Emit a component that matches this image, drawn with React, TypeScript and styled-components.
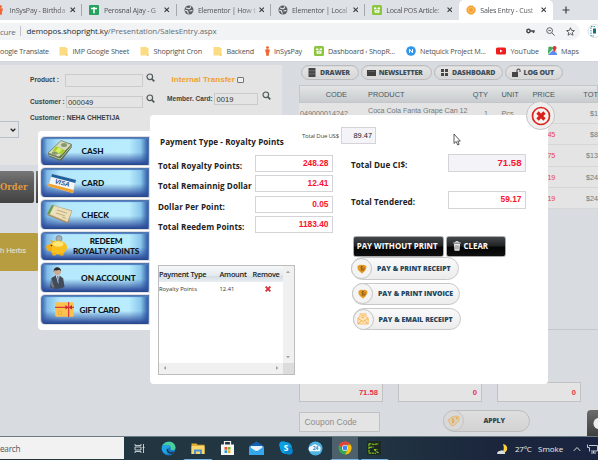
import React from "react";
import styled, { createGlobalStyle, css } from "styled-components";

const Global = createGlobalStyle`
  * { box-sizing: border-box; }
  body { margin: 0; overflow: hidden; font-family: "Open Sans", sans-serif; }
  svg { display: block; flex: none; }
`;

const arial = css`font-family: "Liberation Sans", Arial, sans-serif;`;

const Screen = styled.div`
  width: 598px; height: 460px; overflow: hidden; background: #d8dbe0;
  display: flex; flex-direction: column; white-space: nowrap;
`;

/* ---------- browser ---------- */
const TabStrip = styled.div`
  height: 20px; flex: none; background: #dee1e6; display: flex; overflow: hidden;
`;
const TabBox = styled.div<{ $active?: boolean; $first?: boolean }>`
  flex: none; width: 94.1px; height: 20px; display: flex; align-items: center; padding-left: 7px;
  margin-left: ${p => (p.$first ? "-11.7px" : "0")};
  background: ${p => (p.$active ? "#fff" : "transparent")};
  border-radius: 5px 5px 0 0;
`;
const TabTitle = styled.span`
  width: 59px; margin-left: 4.5px; font-size: 7.1px; color: #505357; line-height: 12px; letter-spacing: -0.22px;
  mask-image: linear-gradient(90deg, #000 78%, rgba(0, 0, 0, .25) 98%);
`;
const TabClose = styled.svg` margin-left: 1.5px; `;
const TabRule = styled.i` width: 1px; height: 12px; background: #a4a7ab; margin-left: auto; `;
const NewTab = styled.svg` margin: 6px 0 0 9px; `;

const AddressRow = styled.div`
  height: 21px; flex: none; background: #fff; display: flex; align-items: center;
`;
const Omnibox = styled.div`
  width: 586px; height: 17px; margin-top: 1px; background: #f1f3f4; border-radius: 0 9px 9px 0;
  display: flex; align-items: center; font-size: 8px; color: #6a6e73;
`;
const Secure = styled.span` width: 20px; letter-spacing: -0.25px; `;
const Url = styled.span` border-left: 1px solid #bfc2c6; padding-left: 5.5px; line-height: 10px; flex: 1; letter-spacing: -0.1px; b { font-weight: 400; color: #26292d; } `;
const OmniIcons = styled.span` display: flex; gap: 11px; align-items: center; padding-right: 5px; `;
const Extension = styled.svg` margin: 1px 0 0 7px; `;

const Bookmarks = styled.div`
  height: 20px; flex: none; background: #fff; display: grid; align-items: center;
  grid-template-columns: 59px 81px 73px 51.5px 49px 92px 90.5px 51.5px 49px;
`;
const Bookmark = styled.span`
  display: flex; align-items: center; font-size: 7.2px; color: #4d5054; letter-spacing: -0.16px;
  height: 16px; margin-top: -1px;
  svg { margin-right: 4.5px; }
`;

/* ---------- page ---------- */
const Page = styled.main`
  height: 375px; flex: none; position: relative; display: grid; grid-template-columns: 299px 299px; ${arial}
  background: #d8dbe0; border-top: 1px solid #d2d6da;
`;
const LeftSide = styled.section` padding-top: 3px; `;
const FormPanel = styled.div` width: 282px; height: 100px; background: #e4e4e4; display: flex; `;
const MainFields = styled.div` width: 137px; margin-left: 30px; `;
const CardFields = styled.div` width: 115px; `;
const FieldRow = styled.div<{ $top: number; $h: number }>`
  display: flex; align-items: center; margin-top: ${p => p.$top}px; height: ${p => p.$h}px;
  svg { margin: -6px 0 0 3.5px; }
`;
const FieldLabel = styled.label<{ $w?: number; $up?: boolean }>`
  width: ${p => (p.$w ? p.$w + "px" : "auto")}; font-size: 6.6px; font-weight: 700; color: #3f3f3f;
  padding-bottom: ${p => (p.$up ? 2 : 0)}px;
`;
const FieldBox = styled.div<{ $w: number }>`
  width: ${p => p.$w}px; height: 12.5px; border: 1px solid #cbcbcb; padding-left: 1.5px; font-size: 7.6px; line-height: 11px; color: #333;
`;
const Transfer = styled.span` color: #f0a030; font-size: 8px; font-weight: 700; width: 66px; padding-left: 4.5px; letter-spacing: 0.05px; `;
const Check = styled.i` width: 6.5px; height: 6.5px; border: 1px solid #777; border-radius: 1px; background: #eee; margin-left: 4px;`;
const SelectBox = styled.div`
  width: 19px; height: 16.5px; border: 1px solid #bcc0cc; border-left: 0; margin: -44px 0 0; padding: 6px 0 0 9.5px;
`;
const CategoryRow = styled.div`
  display: flex; gap: 2px; margin-top: 33px; height: 32px;
`;
const CategoryButton = styled.div<{ $w: number }>`
  width: ${p => p.$w}px; border-radius: 0 2px 2px 0; background: linear-gradient(#777, #606060 35%, #424242);
  color: #e29a3c; font: 700 8.3px/33px "DejaVu Serif", serif; letter-spacing: 0.1px;
`;
const ProductTile = styled.div`
  margin-top: 30px; width: 39px; height: 38px; border-radius: 0 3px 3px 0; background: #b79d3f;
  color: #ece8dc; font-size: 7.6px; line-height: 36px; letter-spacing: -0.1px;
`;

const RightSide = styled.section` padding-top: 3px; display: flex; flex-direction: column; overflow: hidden; `;
const Toolbar = styled.nav` display: flex; gap: 2px; padding: 0 0 0 2px; height: 15px; `;
const ToolButton = styled.button<{ $w: number; $gap?: number; $pad?: number }>`
  width: ${p => p.$w}px; height: 15px; flex: none; border: 1px solid #b9bbbd; border-radius: 8px; background: linear-gradient(#e6e6e6, #d6d6d6);
  box-shadow: inset 0 0 0 1px #dadada; padding: 0 0 0 ${p => p.$pad ?? 6}px; display: flex; align-items: center; gap: ${p => p.$gap ?? 4}px;
  font: 800 7px/10px "Open Sans", sans-serif; color: #3d4f5b; letter-spacing: -0.18px; white-space: nowrap;
`;
const cartCols = css` display: grid; grid-template-columns: 47px 21px 104px 16px 31px 36px 43px; `;
const CartHead = styled.div`
  ${cartCols} margin-top: 5px; height: 18px; flex: none; border: 1px solid #c4c7ca; background: linear-gradient(#e2e4e5, #c9ccce);
  font-size: 7.4px; line-height: 17px; color: #465661; span { text-align: right; }
  span:nth-child(3) { text-align: left; } span:nth-child(5) { text-align: left; padding-left: 13.5px; }
`;
const CartRow = styled.div`
  ${cartCols} height: 21.2px; flex: none; padding-left: 1px; border-bottom: 1px solid #d6d6d6; background: #e4e4e4; font-size: 7.2px; line-height: 22px; color: #777;
  span { text-align: right; } span:nth-child(3) { text-align: left; line-height: 16px; letter-spacing: -0.06px; }
  span:nth-child(5) { text-align: left; padding-left: 13.5px; }
  span:nth-child(6) { color: #e8414c; letter-spacing: -0.25px; }
`;
const Divider = styled.hr` margin: 120px 0 0; border: 0; border-top: 1px solid #c4c7cb; width: 100%; flex: none; `;
const Totals = styled.div` margin-top: 52px; display: flex; gap: 15px; flex: none; padding-left: 0.4px; `;
const TotalBox = styled.div`
  width: 84px; height: 20px; flex: none; border: 1px solid #c2c2c2; background: #e4e4e4; color: #e8304a; font-weight: 700;
  font-size: 7.6px; line-height: 20px; text-align: right; padding-right: 4.5px;
`;
const CouponRow = styled.div` display: flex; margin-top: 9px; padding-left: 0.4px; height: 25px; flex: none; `;
const CouponInput = styled.div`
  width: 80.5px; flex: none; height: 20px; margin-top: 1px; border: 1px solid #c2c2c2; background: #e4e4e4; color: #8d8d8d; font-size: 8.5px; line-height: 18px; padding-left: 4px;
`;
const ApplyButton = styled.button`
  width: 86.5px; flex: none; height: 22px; margin: -1px 0 0 63.5px; padding: 0; border-radius: 11px; border: 1.5px solid #bdbdbd; background: linear-gradient(#dedede, #d3d3d3);
  display: flex; align-items: center; font: 800 6.8px "Open Sans", sans-serif; color: #35454f; letter-spacing: -0.1px;
`;
const RoundIcon = styled.span<{ $muted?: boolean }>`
  width: 21px; height: 21px; margin: -1px 0 -1px -1px; flex: none; border-radius: 50%; border: 1.5px solid #c4c4c4; display: grid; place-items: center;
  background: ${p => (p.$muted ? "#d9d9d9" : "#f4f4f4")};
`;
const ApplyText = styled.span` margin-left: 19px; `;
const ChatTab = styled.div`
  width: 20px; height: 26px; margin: -1px 0 0 57.5px; flex: none; border-radius: 4px 0 0 0; background: linear-gradient(#6c6c6c, #3f3f3f); padding: 8px 0 0 6px;
`;

/* ---------- payment methods ---------- */
const MethodMenu = styled.aside`
  position: absolute; left: 38px; top: 69px; width: 116px; height: 199px; background: #fff; border-radius: 4px; padding: 5.6px 0 0 3px;
  display: flex; flex-direction: column; gap: 3.1px;
`;
const Method = styled.button<{ $pad: number }>`
  width: 107.5px; height: 28.6px; flex: none; border: 1px solid #5575ad; border-bottom-color: #2b4a8e; border-radius: 4px 0 0 4px; padding: 0;
  background: linear-gradient(rgba(36,70,150,0) 55%, rgba(44,78,158,.55) 80%, #2c4a98 100%),
    linear-gradient(90deg, #3a68b0 0, #82bce8 5%, #b5e8fc 17%, #b9ecfd 82%, #8cc8ec 93%, #2f5ba8 100%);
  box-shadow: inset 0 1px 1px #4a7ec2, 0 0 0 1px #dfdfe4;
  display: grid; grid-template-columns: ${p => p.$pad}px 1fr; align-items: center;
  font: 900 8.2px/10px Lato, sans-serif; color: #0c1420; text-align: left;
`;
const MethodIcon = styled.span<{ $m: number }>` padding-left: ${p => p.$m}px; `;
const MethodLabel = styled.span<{ $center?: boolean; $ls?: number }>`
  text-align: ${p => (p.$center ? "center" : "left")}; padding-right: ${p => (p.$center ? 9 : 0)}px; white-space: pre; letter-spacing: ${p => p.$ls ?? 0}px; padding-top: 1px;
`;

/* ---------- dialog ---------- */
const Dialog = styled.div`
  position: absolute; left: 150px; top: 53px; width: 398px; height: 269px; background: #fff; border-radius: 4px;
  display: grid; grid-template-columns: 193px 1fr; font-family: "Open Sans", sans-serif; color: #222;
`;
const CloseButton = styled.button`
  position: absolute; left: 376px; top: -14px; width: 29px; height: 29px; border: 1px solid #c4c4c4; border-radius: 50%; background: #efefef; padding: 0; display: grid; place-items: center;
`;
const DialogLeft = styled.div` padding-left: 8px; `;
const DialogTitle = styled.h2` margin: 19.5px 0 0 2px; height: 14px; font-size: 8.1px; line-height: 14px; font-weight: 700; letter-spacing: 0.06px; `;
const AmountList = styled.div` margin-top: 6px; `;
const AmountRow = styled.div<{ $h: number }>`
  display: grid; grid-template-columns: 97px auto; height: ${p => p.$h}px; align-items: start; justify-content: start;
`;
const AmountLabel = styled.span` font-size: 8.1px; font-weight: 700; line-height: 12px; padding-top: 5px; letter-spacing: 0.06px; `;
const AmountBox = styled.div<{ $shade?: boolean; $size?: number }>`
  width: 77.5px; height: 17.2px; border: 1px solid #d4d4d8; background: ${p => (p.$shade ? "#f3f3f8" : "#fff")}; ${arial}
  font-size: ${p => p.$size ?? 8.4}px; font-weight: 700; color: #fa1430; text-align: right; padding-right: 3px; line-height: 15.6px;
`;
const DialogRight = styled.div` padding-top: 12.4px; `;
const UsdRow = styled.div` display: flex; margin-left: -41px; height: 27px; font-size: 6px; color: #444; `;
const UsdLabel = styled.span` width: 39px; line-height: 18px; letter-spacing: -0.2px; `;
const UsdBox = styled.div`
  width: 35px; height: 17px; border: 1px solid #d4d4d8; background: #f3f3f8; ${arial} font-size: 7.4px; line-height: 15.5px; text-align: right; padding-right: 3px; color: #222;
`;
const Due = styled.div` padding-left: 8px; height: 81.6px; `;
const Actions = styled.div` padding-left: 8px; `;
const DarkRow = styled.div` display: flex; gap: 2.5px; padding-left: 2px; height: 21.5px; `;
const DarkButton = styled.button<{ $w: number; $pad: number }>`
  width: ${p => p.$w}px; height: 21px; padding: 0 0 1px ${p => p.$pad}px; border: 1px solid #aaa; border-radius: 2.5px; background: linear-gradient(#45484b, #222426 45%, #050505 55%, #101010);
  color: #fff; font: 700 7.9px "Open Sans", sans-serif; display: flex; align-items: center; gap: 3px; white-space: nowrap;
`;
const PillButton = styled.button<{ $in: number }>`
  width: 108px; height: 22.5px; margin: 0 0 2.7px ${p => p.$in}px; padding: 0; border: 1.5px solid #c9c9c9; border-radius: 12px; background: linear-gradient(#fafafa, #ececec);
  display: flex; align-items: center; font: 800 6.9px "Open Sans", sans-serif; color: #23465c; white-space: nowrap;
`;
const PillText = styled.span` margin-left: 5px; `;
const PaidTable = styled.div`
  margin-top: 31.5px; width: 136.5px; height: 109.5px; border: 1px solid #bdbdbd; display: grid; grid-template: 1fr 10.5px / 1fr 10.5px;
`;
const paidCols = css` display: grid; grid-template-columns: 60.5px 33px 30px; `;
const PaidBody = styled.div` overflow: hidden; `;
const PaidHead = styled.div`
  ${paidCols} height: 15.5px; background: linear-gradient(#f6f8f9, #e3eaee 60%, #d4dde3 62%, #e8edf0); font-size: 7.4px; font-weight: 600; line-height: 17px; color: #222; letter-spacing: -0.28px;
`;
const PaidRow = styled.div` ${paidCols} height: 14px; font-size: 5.8px; line-height: 14px; color: #333; svg { margin: 4.5px 0 0 12px; } `;
const ScrollV = styled.div` background: #f0f0f0; display: flex; flex-direction: column; align-items: center; justify-content: space-between; padding: 4px 0; `;
const ScrollH = styled.div` background: #f0f0f0; display: flex; align-items: center; justify-content: space-between; padding: 0 4px; `;
const Corner = styled.div` background: #dcdcdc; `;
const Pointer = styled.svg` position: absolute; left: 302.5px; top: 18px; `;

/* ---------- taskbar ---------- */
const Taskbar = styled.footer`
  height: 24px; flex: none; background: linear-gradient(90deg, #22353f, #223744 60%, #1b263c 82%, #1a2440); display: flex; color: #eee; border-top: 1px solid #6a7c82;
`;
const Search = styled.div` width: 124.4px; flex: none; height: 22px; background: #f2f2f2; color: #555; font-size: 8.2px; line-height: 23px; letter-spacing: -0.25px; `;
const TaskIcons = styled.div` display: flex; `;
const TaskIcon = styled.div<{ $on?: boolean; $open?: boolean }>`
  width: 29.4px; flex: none; display: grid; place-items: center; background: ${p => (p.$on ? "#4d606b" : "transparent")};
  border-bottom: 1.5px solid ${p => (p.$on || p.$open ? "#7ab4e6" : "transparent")}; border-left: 2.5px solid transparent; border-right: 2.5px solid transparent; background-clip: padding-box;
`;
const Tray = styled.div` margin-left: auto; display: flex; align-items: center; font-size: 8px; width: 101px; flex: none; `;
const Temp = styled.span` width: 23px; margin-left: 6px; letter-spacing: -0.25px; `;
const Weather = styled.span` width: 35px; `;
const Monitor = styled.svg` margin-left: 6px; `;

/* ---------- icons ---------- */
const Folder = () => <svg width="9" height="10" viewBox="0 0 9 10"><path d="M.5 1h6l1 1h1v7.5h-8z" fill="#fbdc82" /><path d="M7 8.5h1.5v1H7z" fill="#e2b94a" /></svg>;
const Person = () => <svg width="5" height="10" viewBox="0 0 5 10"><circle cx="2.5" cy="1.6" r="1.4" fill="#f0642f" /><path d="M.4 3.3h4.2v3H3.9v3.4H1.1V6.3H.4z" fill="#f0642f" /></svg>;
const Globe = () => <svg width="10" height="10" viewBox="0 0 10 10"><circle cx="5" cy="5" r="4.5" fill="#5a5f64" /><path d="M2 3.2c1.6-.5 2 .8 3.4.4S6.6 1.7 6.2 1.4M1.2 5.4c2 0 2.6.6 2.6 1.6s.6 1 .6 1.8M5.5 6c1.4-.4 2.4-.4 3-.2" stroke="#dee1e6" strokeWidth="1.1" fill="none" /></svg>;
const Sheet = () => <svg width="10" height="10" viewBox="0 0 10 10"><rect width="10" height="10" rx="1" fill="#26a25e" /><path d="M2 3.6h6M5 2v6.2" stroke="#fff" strokeWidth="1.5" /></svg>;
const Bag = () => <svg width="10" height="10" viewBox="0 0 10 10"><rect width="10" height="10" rx="1.5" fill="#8cc63f" /><path d="M2 2.6h2.2v1.1h1.6V2.6H8v1.6H2zM2.6 5h4.8v2.7H2.6z" fill="#fff" /><path d="M3.7 5.6c.4 1 2.2 1 2.6 0" stroke="#8cc63f" strokeWidth=".7" fill="none" /></svg>;
const Sun = () => <svg width="10" height="10" viewBox="0 0 10 10"><circle cx="5" cy="5" r="4.3" fill="#f7a030" stroke="#f6a43d" strokeDasharray="1 .6" /><circle cx="5" cy="5" r="2.6" fill="none" stroke="#ffd18a" strokeWidth=".7" /></svg>;
const RemoveMark = () => <svg width="6" height="6" viewBox="0 0 5 5"><path d="M.5.5l4 4m0-4l-4 4" stroke="#d8323c" strokeWidth="1.6" /></svg>;
const Magnifier = () => <svg width="9" height="9" viewBox="0 0 9 9"><circle cx="3.8" cy="3.8" r="2.8" fill="none" stroke="#4f5a5a" strokeWidth="1.2" /><path d="M5.8 5.8l2.5 2.5" stroke="#4f5a5a" strokeWidth="1.7" /></svg>;
const Coin = () => <svg width="10" height="10" viewBox="0 0 10 10"><path d="M.5 2.2Q2.5.2 5 1q3-.8 4.5 1.4Q9.6 5.6 7.4 7.4L5 9.5 2.6 7.5Q0 5.5.5 2.2z" fill="#e59a25" /><path d="M5.8 2.6q-2.3-.5-2 .9c.3 1 2.2.7 1.9 1.9q-.4 1-2.2.5M4.8 1.8v5M7 3.2v2.6l-1.3 1" stroke="#7b5218" strokeWidth=".7" fill="none" /></svg>;
const Envelope = () => <svg width="12" height="12" viewBox="0 0 12 12"><path d="M.8 5L3 3.5V.8h6v2.7L11.2 5v6H.8z" fill="#fde3b8" stroke="#f5b95c" strokeWidth=".8" /><path d="M1 5.5l5 3 5-3M1 10.8l3.5-3M11 10.8l-3.5-3M4.4 2.7h3.2M4.4 4.4h3.2" stroke="#f3ac47" strokeWidth=".8" fill="none" /></svg>;
const PriceTag = () => <svg width="13" height="12" viewBox="0 0 13 12"><path d="M1 5.2L6 1.4l5.7-.2.3 4.6-5.3 5-2.4-.3z" fill="#dccfb8" stroke="#e9b264" strokeWidth=".9" /><circle cx="9.7" cy="3.2" r=".8" fill="#d8952f" /><path d="M6.8 3.8q-2 .2-1.5 1.4c.5.9 2 .4 1.8 1.6q-.3 1-2 .9M5.9 3.3v5" stroke="#e39a38" strokeWidth=".7" fill="none" /></svg>;
const Trash = () => <svg width="8" height="10" viewBox="0 0 8 10"><path d="M.3 2h7.4M2.8 1.8V.7h2.4v1.1" stroke="#eee" strokeWidth="1" fill="none" /><path d="M1 3h6l-.5 6.7h-5z" fill="#eee" /><path d="M2.8 4.2v4.2M4 4.2v4.2M5.2 4.2v4.2" stroke="#444" strokeWidth=".5" /></svg>;
const Arrow = ({ d }: { d: string }) => <svg width="4" height="4" viewBox="0 0 4 4"><path d={d} fill="#a2a2a2" /></svg>;

const Cash = () => <svg width="30" height="24" viewBox="0 0 30 24"><path d="M2 14l1 3.500 12 4.500L26 8l-.5-3L15 2z" fill="#5c6e4b" /><path d="M2 14l11 4L25.500 5.500 15 1.500z" fill="#d3dabd" stroke="#71845d" strokeWidth=".8" /><path d="M3 16l11 4L25.500 7" stroke="#e6ead2" strokeWidth=".7" fill="none" /><ellipse cx="18" cy="6" rx="3" ry="2" fill="#89996f" /><ellipse cx="9" cy="14" rx="3" ry="1.700" fill="#89996f" /><path d="M10 7.200l9.500 4.300-3.800 4.400-9.200-4.300z" fill="#a6ce39" /><path d="M12.200 8.600l3.800 1.900-3 3.500-3.600-1.800z" fill="#d9ef5b" /></svg>;
const Visa = () => <svg width="32" height="24" viewBox="0 0 32 24"><path d="M6 3l24 6-3 13L2 15z" fill="#f3f6f7" stroke="#a6b6c2" strokeWidth=".5" /><path d="M6 3l24 6-.8 3L5.200 5.800z" fill="#1f5f9c" /><path d="M2.800 12.600l24.800 6.400-.7 3L2 15z" fill="#f0a32c" /><text x="8.500" y="12.500" transform="rotate(13 9 12)" fontFamily="Liberation Sans" fontSize="6.500" fontWeight="700" fontStyle="italic" fill="#184f8c">VISA</text></svg>;
const Cheque = () => <svg width="30" height="24" viewBox="0 0 30 24"><path d="M2 13L8 4l19 4.500-4 13z" fill="#9e895c" /><path d="M2 11.500L7 3l20 6-4.500 11z" fill="#ecdfb9" stroke="#bca877" strokeWidth=".6" /><path d="M2 11.500L7 3l2 .6L4.500 12.700z" fill="#5ea05a" /><path d="M12 8l10 3.100M11 11l9 2.900M17 15l4 1.400" stroke="#bca877" strokeWidth=".9" /></svg>;
const Piggy = () => <svg width="26" height="26" viewBox="0 0 26 26"><circle cx="16" cy="5.500" r="3" fill="#a5afb4" stroke="#737d84" strokeWidth=".7" /><ellipse cx="15" cy="14.500" rx="9" ry="7" fill="#f9bf1e" /><path d="M8 9L7 6.500 11 8.500zM3 13l5-2.500 1 8-5-1zM9 20h4v2.500H9.500zM17 20h4l-.6 2.500H17z" fill="#f2ae14" /><ellipse cx="15" cy="11" rx="5.500" ry="2.700" fill="#ffe676" /><circle cx="8.500" cy="12.500" r=".8" fill="#3a2a10" /></svg>;
const Agent = () => <svg width="22" height="26" viewBox="0 0 22 26"><circle cx="11.500" cy="6.500" r="3.500" fill="#c9ab94" /><path d="M7.800 7c-1-5.500 6.600-6.500 7.400-1l-2-1.300q-3.500 1.300-4.500.3z" fill="#2b2b30" /><path d="M4 22.500L5.500 13l4.500-2.800h3l4.200 3 1.300 8.800q-7 3.500-14.500.5z" fill="#414b59" /><path d="M9.800 10.200h3.800L12.200 19z" fill="#e8edf1" /><path d="M11.200 11h1.200l.4 5-.8 2z" fill="#3d6b99" /><path d="M5.500 13.500q-2 4 .500 9h2.500z" fill="#6f7b88" /></svg>;
const Gift = () => <svg width="19" height="15" viewBox="0 0 19 15"><rect x=".3" y=".3" width="18.400" height="14.400" rx="1.500" fill="#fbc34e" /><path d="M0 4.800h19v1.200H0zM13 0h1.200v15H13z" fill="#dc3b3b" /><path d="M13.600 5.400L10.500 3v4.500zM13.600 5.400L17 3v4.500z" fill="#c9252d" /><path d="M3.500 9h3v3.500h-3z" fill="none" stroke="#f0a83c" strokeWidth=".8" /></svg>;

const methods = [
  { icon: <Cash />, text: "CASH", pad: 39.5, m: 3.5 },
  { icon: <Visa />, text: "CARD", pad: 39.5, m: 4 },
  { icon: <Cheque />, text: "CHECK", pad: 39.5, m: 3 },
  { icon: <Piggy />, text: "REDEEM\nROYALTY POINTS", pad: 31, m: 1, center: true, ls: -0.1 },
  { icon: <Agent />, text: "ON ACCOUNT", pad: 39, m: 4 },
  { icon: <Gift />, text: "GIFT CARD", pad: 37.5, m: 13, ls: -0.25 },
];

const tabs = [
  { icon: <Person />, title: "InSysPay - Birthda" },
  { icon: <Sheet />, title: "Perosnal Ajay - G" },
  { icon: <Globe />, title: "Elementor | How t" },
  { icon: <Globe />, title: "Elementor | Local" },
  { icon: <Bag />, title: "Local POS Article:" },
  { icon: <Sun />, title: "Sales Entry - Cust", active: true },
];
const TabIcon = styled.span` width: 10px; display: grid; place-items: center; `;

const cart = [
  ["049000014242", "Coca Cola Fanta Grape Can 12", "1", "Pcs", "", "$1"],
  ["", "", "", "", "45", "$8"],
  ["", "", "", "", "75", "$13"],
  ["", "", "", "", "19", "$24"],
  ["", "", "", "", "19", "$24"],
];

export default function App() {
  return (
    <Screen>
      <Global />
      <TabStrip>
        {tabs.map((t, i) => (
          <TabBox key={i} $first={i === 0} $active={t.active}>
            <TabIcon>{t.icon}</TabIcon>
            <TabTitle>{t.title}</TabTitle>
            <TabClose width="5.500" height="5.500" viewBox="0 0 5 5"><path d="M.5.5l4 4m0-4l-4 4" stroke="#35383b" strokeWidth="1" /></TabClose>
            {i < 4 && <TabRule />}
          </TabBox>
        ))}
        <NewTab width="8" height="8" viewBox="0 0 8 8"><path d="M4 .5v7M.5 4h7" stroke="#3c4043" strokeWidth="1.200" /></NewTab>
      </TabStrip>
      <AddressRow>
        <Omnibox>
          <Secure>cure</Secure>
          <Url><b>demopos.shopright.ky</b>/Presentation/SalesEntry.aspx</Url>
          <OmniIcons>
            <svg width="9" height="8" viewBox="0 0 9 8"><circle cx="2.500" cy="4" r="1.700" fill="none" stroke="#44474b" strokeWidth="1.400" /><path d="M4 4h4.800M7.500 4v2" stroke="#44474b" strokeWidth="1.500" /></svg>
            <svg width="9" height="9" viewBox="0 0 9 9"><circle cx="3.600" cy="3.600" r="2.900" fill="none" stroke="#5f6368" /><path d="M5.800 5.800l2.800 2.800M2.300 3.600h2.600" stroke="#5f6368" /></svg>
            <svg width="9" height="9" viewBox="0 0 24 24"><path d="M12 2l3 7 7.500.6-5.700 5 1.700 7.400-6.500-4-6.500 4 1.700-7.400-5.700-5L9 9z" fill="none" stroke="#4a4d51" strokeWidth="2.300" /></svg>
          </OmniIcons>
        </Omnibox>
        <Extension width="11" height="14" viewBox="0 0 11 14"><circle cx="7.500" cy="7" r="6.500" fill="#fff" stroke="#dcdcdc" /><path d="M8 2.500H4V12h4" fill="none" stroke="#2b9aa8" strokeDasharray="1.500 1" /><path d="M6 4.500h3v5H6z" fill="#176e7e" /></Extension>
      </AddressRow>
      <Bookmarks>
        <Bookmark>oogle Translate</Bookmark>
        <Bookmark><Folder />IMP Google Sheet</Bookmark>
        <Bookmark><Folder />Shopright Cron</Bookmark>
        <Bookmark><Folder />Backend</Bookmark>
        <Bookmark><Person />InSysPay</Bookmark>
        <Bookmark><Bag />Dashboard ‹ ShopR...</Bookmark>
        <Bookmark><svg width="10" height="10" viewBox="0 0 10 10"><circle cx="5" cy="5" r="4.800" fill="#2f96ec" /><path d="M3.500 7V3.200l3 3.700V3" stroke="#fff" fill="none" /></svg>Netquick Project M...</Bookmark>
        <Bookmark><svg width="10" height="8" viewBox="0 0 10 8"><rect y=".5" width="10" height="7" rx="1.500" fill="#f01c1c" /><path d="M4 2.500v3L6.700 4z" fill="#fff" /></svg>YouTube</Bookmark>
        <Bookmark><svg width="9" height="9" viewBox="0 0 9 9"><path d="M.5.8h4L0 6z" fill="#35a853" /><path d="M0 9V5L5 1l4 4v4z" fill="#d9dfe2" /><path d="M0 9l5.500-5L9 8v1z" fill="#5b8def" /><path d="M0 5l4-4 1.300 1L0 8z" fill="#3fae5c" /><path d="M6.500 6L4.800 2.500a1.900 1.900 0 1 1 3.600 0z" fill="#d93a30" /></svg>Maps</Bookmark>
      </Bookmarks>

      <Page>
        <LeftSide>
          <FormPanel>
            <MainFields>
              <FieldRow $top={9} $h={12.5}><FieldLabel $w={34.5} $up>Product :</FieldLabel><FieldBox $w={78} /><Magnifier /></FieldRow>
              <FieldRow $top={9.2} $h={12.5}><FieldLabel $w={35.5}>Customer :</FieldLabel><FieldBox $w={77}>000049</FieldBox><Magnifier /></FieldRow>
              <FieldRow $top={4.5} $h={10}><FieldLabel>Customer : NEHA CHHETIJA</FieldLabel></FieldRow>
            </MainFields>
            <CardFields>
              <FieldRow $top={8.5} $h={12.5}><Transfer>Internal Transfer</Transfer><Check /></FieldRow>
              <FieldRow $top={6.5} $h={12.5}><FieldLabel $w={47}>Member. Card:</FieldLabel><FieldBox $w={44}>0019</FieldBox><Magnifier /></FieldRow>
            </CardFields>
          </FormPanel>
          <SelectBox><svg width="6" height="4" viewBox="0 0 6 4"><path d="M.7.8L3 3 5.300.8" stroke="#222" strokeWidth="1.300" fill="none" /></svg></SelectBox>
          <CategoryRow><CategoryButton $w={34}>Order</CategoryButton><CategoryButton $w={20} /></CategoryRow>
          <ProductTile>h Herbs</ProductTile>
        </LeftSide>

        <RightSide>
          <Toolbar>
            <ToolButton $w={58}><svg width="8" height="9" viewBox="0 0 8 9"><path d="M.5 0h7v9h-7z" fill="#464646" /><path d="M1 2.800h6M1 5.800h6" stroke="#888" strokeWidth=".6" /></svg>DRAWER</ToolButton>
            <ToolButton $w={71} $gap={3.2} $pad={4.5}><svg width="9" height="6" viewBox="0 0 9 6"><path d="M0 0h9v6H0z" fill="#3f3f3f" /><path d="M1 1.500h7" stroke="#777" strokeWidth=".5" /></svg>NEWSLETTER</ToolButton>
            <ToolButton $w={69}><svg width="7" height="7" viewBox="0 0 7 7"><path d="M0 0h3v3H0zM4 0h3v3H4zM0 4h3v3H0zM4 4h3v3H4z" fill="#474747" /></svg>DASHBOARD</ToolButton>
            <ToolButton $w={58} $gap={3} $pad={5.5}><svg width="9" height="9" viewBox="0 0 9 9"><path d="M0 4h6v5H0z" fill="#464646" /><path d="M5 4V2q1.500-2 3 0v2" stroke="#464646" fill="none" strokeWidth="1.100" /></svg>LOG OUT</ToolButton>
          </Toolbar>
          <CartHead><span>CODE</span><span /><span>PRODUCT</span><span>QTY</span><span>UNIT</span><span>PRICE</span><span>TOT</span></CartHead>
          {cart.map((r, i) => (
            <CartRow key={i}><span>{r[0]}</span><span /><span>{r[1]}</span><span>{r[2]}</span><span>{r[3]}</span><span>{r[4]}</span><span>{r[5]}</span></CartRow>
          ))}
          <Divider />
          <Totals><TotalBox>71.58</TotalBox><TotalBox>0</TotalBox><TotalBox>0</TotalBox></Totals>
          <CouponRow>
            <CouponInput>Coupon Code</CouponInput>
            <ApplyButton><RoundIcon $muted><PriceTag /></RoundIcon><ApplyText>APPLY</ApplyText></ApplyButton>
            <ChatTab><svg width="12" height="11" viewBox="0 0 12 11"><circle cx="6" cy="5.500" r="5.500" fill="#eee" /></svg></ChatTab>
          </CouponRow>
        </RightSide>

        <MethodMenu>
          {methods.map(m => (
            <Method key={m.text} $pad={m.pad}><MethodIcon $m={m.m}>{m.icon}</MethodIcon><MethodLabel $center={m.center} $ls={m.ls}>{m.text}</MethodLabel></Method>
          ))}
        </MethodMenu>

        <Dialog>
          <DialogLeft>
            <DialogTitle>Payment Type - Royalty Points</DialogTitle>
            <AmountList>
              <AmountRow $h={20.5}><AmountLabel>Total Royalty Points:</AmountLabel><AmountBox>248.28</AmountBox></AmountRow>
              <AmountRow $h={20.5}><AmountLabel>Total Remainnig Dollar</AmountLabel><AmountBox>12.41</AmountBox></AmountRow>
              <AmountRow $h={20.5}><AmountLabel>Dollar Per Point:</AmountLabel><AmountBox>0.05</AmountBox></AmountRow>
              <AmountRow $h={17.5}><AmountLabel>Total Reedem Points:</AmountLabel><AmountBox>1183.40</AmountBox></AmountRow>
            </AmountList>
            <PaidTable>
              <PaidBody>
                <PaidHead><span>Payment Type</span><span>Amount</span><span>Remove</span></PaidHead>
                <PaidRow><span>Royalty Points</span><span>12.41</span><RemoveMark /></PaidRow>
              </PaidBody>
              <ScrollV><Arrow d="M0 3l2-2.300L4 3z" /><Arrow d="M0 1l2 2.300L4 1z" /></ScrollV>
              <ScrollH><Arrow d="M3 0L.7 2 3 4z" /><Arrow d="M1 0l2.300 2L1 4z" /></ScrollH>
              <Corner />
            </PaidTable>
          </DialogLeft>
          <DialogRight>
            <UsdRow><UsdLabel>Total Due US$</UsdLabel><UsdBox>89.47</UsdBox></UsdRow>
            <Due>
              <AmountRow $h={37}><AmountLabel>Total Due CI$:</AmountLabel><AmountBox $shade $size={9.6}>71.58</AmountBox></AmountRow>
              <AmountRow $h={20}><AmountLabel>Total Tendered:</AmountLabel><AmountBox>59.17</AmountBox></AmountRow>
            </Due>
            <Actions>
              <DarkRow>
                <DarkButton $w={90.5} $pad={2.7}>PAY WITHOUT PRINT</DarkButton>
                <DarkButton $w={60} $pad={5.5}><Trash />CLEAR</DarkButton>
              </DarkRow>
              <PillButton $in={0}><RoundIcon><Coin /></RoundIcon><PillText>PAY &amp; PRINT RECEIPT</PillText></PillButton>
              <PillButton $in={1}><RoundIcon><Coin /></RoundIcon><PillText>PAY &amp; PRINT INVOICE</PillText></PillButton>
              <PillButton $in={1.5}><RoundIcon><Envelope /></RoundIcon><PillText>PAY &amp; EMAIL RECEIPT</PillText></PillButton>
            </Actions>
          </DialogRight>
          <CloseButton><svg width="20" height="20" viewBox="0 0 20 20"><circle cx="10" cy="10" r="8.500" fill="#f7f1f0" stroke="#d8281e" strokeWidth="1.700" /><path d="M6.500 6.500l7 7m0-7l-7 7" stroke="#d92019" strokeWidth="3.200" /></svg></CloseButton>
          <Pointer width="8" height="13" viewBox="0 0 8 13"><path d="M1 1v9.500l2.200-2 1.500 3.500 1.500-.7-1.500-3.200h2.600z" fill="#fff" stroke="#333" strokeWidth=".8" /></Pointer>
        </Dialog>
      </Page>

      <Taskbar>
        <Search>earch</Search>
        <TaskIcons>
          <TaskIcon><svg width="11" height="11" viewBox="0 0 11 11"><path d="M1 1v1.500h6V1M1 10V8.500h6V10M1 4h6v3H1zM9.500 1v9M8.500 4.500h2" stroke="#d5dadd" fill="none" strokeWidth=".9" /></svg></TaskIcon>
          <TaskIcon><svg width="15" height="15" viewBox="0 0 15 15"><circle cx="7.500" cy="7.500" r="7" fill="#1276c9" /><path d="M1 5.500C3-1 14-1 14.500 6.500c0 3-4 3.500-5 2 1-3-1-4.500-3.500-4.500S2 5 1 5.500z" fill="#4bcf9a" /><path d="M1 5.500C4 2.500 9 3.500 9 7c-3-1-4.500 3.500-1 5.500-4 1.500-8-2-7-7z" fill="#22a4e4" /><path d="M6.500 8c-1 3 2.500 5 6 3.500" stroke="#22353f" strokeWidth="1.500" fill="none" /></svg></TaskIcon>
          <TaskIcon $open><svg width="14" height="13" viewBox="0 0 14 13"><path d="M.5 1.500h5l1 1.300h7V12H.5z" fill="#e3ac35" /><path d="M.5 4h13v8H.5z" fill="#fad66e" /><path d="M3 12V7.500h8V12H9V9.500H5V12z" fill="#4b93cf" /></svg></TaskIcon>
          <TaskIcon><svg width="15" height="16" viewBox="0 0 15 16"><path d="M4.500 5V1.500h6V5" stroke="#eee" fill="none" strokeWidth="1.200" /><path d="M1 4.500h13V15H1z" fill="#f5f5f5" /><path d="M4.500 7h2.700v2.700H4.500z" fill="#e9502c" /><path d="M7.800 7h2.700v2.700H7.800z" fill="#7eb82c" /><path d="M4.500 10.300h2.700V13H4.500z" fill="#1f9fe2" /><path d="M7.800 10.300h2.700V13H7.800z" fill="#f8b414" /></svg></TaskIcon>
          <TaskIcon><svg width="15" height="14" viewBox="0 0 15 14"><path d="M0 5l7.500-4.500L15 5v9H0z" fill="#1263b4" /><path d="M1.500 5h12v5h-12z" fill="#e8f3fb" /><path d="M0 5.500l7.500 5 7.500-5V14H0z" fill="#33a8ee" /></svg></TaskIcon>
          <TaskIcon><svg width="14" height="14" viewBox="0 0 14 14"><circle cx="7" cy="7" r="6" fill="#0a9fe3" /><circle cx="4" cy="4" r="3.800" fill="#0a9fe3" /><circle cx="10" cy="10" r="3.800" fill="#0784cf" /><text x="7" y="10" textAnchor="middle" fontFamily="Open Sans" fontWeight="700" fontSize="8.500" fill="#fff">S</text></svg></TaskIcon>
          <TaskIcon><svg width="15" height="15" viewBox="0 0 15 15"><circle cx="7.500" cy="7.500" r="7" fill="#4fb3e4" /><path d="M3 10.300a2.500 2.500 0 0 1 .3-5Q7 1.500 10 4.800q4 .5 2 5.500z" fill="#f2fafe" /><text x="7.500" y="9.300" textAnchor="middle" fontFamily="Open Sans" fontWeight="700" fontSize="5" fill="#2387be">24</text></svg></TaskIcon>
          <TaskIcon $on><svg width="14" height="14" viewBox="0 0 14 14"><circle cx="7" cy="7" r="6.500" fill="#34a853" /><path d="M1.400 3.700A6.500 6.500 0 0 1 12.600 3.700H7L4.200 8.600z" fill="#ea4335" /><path d="M12.600 3.700A6.500 6.500 0 0 1 7 13.500L9.800 8.600 9.500 3.700z" fill="#fbbc05" /><circle cx="7" cy="7" r="3" fill="#fff" /><circle cx="7" cy="7" r="2.400" fill="#4285f4" /></svg></TaskIcon>
          <TaskIcon $open><svg width="14" height="14" viewBox="0 0 14 14"><path d="M0 0h14v14H0z" fill="#1f2722" /><path d="M2 2.500l5 1 4.500-.8M2 2.500v9.500l7 .3M2.500 6.500l4-.5M7 8.500l4.500 3.500M7 8.500h3.500" stroke="#7ccb1c" strokeWidth="1.200" fill="none" strokeDasharray="2.500 .6" /></svg></TaskIcon>
        </TaskIcons>
        <Tray>
          <svg width="12" height="12" viewBox="0 0 12 12"><path d="M6 1q5 1 4 6-1 3-5 2.500 3-2.500 1-8.500z" fill="#ffd23f" /><path d="M0 10q1-2.500 3-2 2-1.500 3.500.5 2 0 1.500 2.500H1q-1 0-1-1z" fill="#d8dde2" /></svg>
          <Temp>27°C</Temp><Weather>Smoke</Weather>
          <svg width="8" height="6" viewBox="0 0 8 6"><path d="M.8 4.800L4 1.500l3.200 3.300" stroke="#ddd" fill="none" /></svg>
          <Monitor width="11" height="10" viewBox="0 0 11 10"><path d="M2 1.500h8.500v5.500H4M6.500 7v2M4 9h5M.5.5v3h2v4" stroke="#ddd" fill="none" strokeWidth=".9" /></Monitor>
        </Tray>
      </Taskbar>
    </Screen>
  );
}
